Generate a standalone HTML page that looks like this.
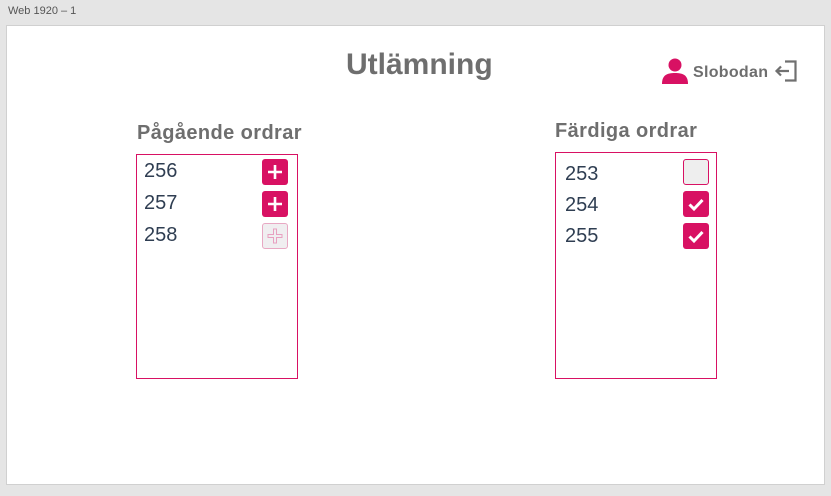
<!DOCTYPE html>
<html><head><style>
body{margin:0;width:831px;height:496px;background:#e5e5e5;font-family:"Liberation Sans",sans-serif;position:relative;overflow:hidden}
.lbl{position:absolute;left:8px;top:5px;font-size:11px;color:#555}
.page{position:absolute;left:6px;top:25px;width:819px;height:460px;background:#fff;border:1px solid #d0d0d0;box-sizing:border-box}
.t{position:absolute;color:#6e6e6e;font-weight:bold}
.box{position:absolute;border:1.5px solid #d81163;box-sizing:border-box}
.n{position:absolute;font-size:20px;color:#2f3e52}
.b{position:absolute;width:26px;height:26px;border-radius:3px;background:#d81163;box-sizing:border-box}
.b svg{position:absolute;left:0;top:0}
.e{background:#f0eef0;border:1.5px solid #e8a8c3}
.e2{background:#eeeeee;border:1.5px solid #d81163}
</style></head><body>
<div class="lbl">Web 1920 – 1</div>
<div class="page"></div>
<div class="t" style="left:346px;top:48px;font-size:30px">Utlämning</div>
<svg style="position:absolute;left:661px;top:58px" width="28" height="26" viewBox="0 0 28 26"><circle cx="14" cy="7" r="6.5" fill="#d81163"/><path d="M1 26 C1 17 6 15 14 15 C22 15 27 17 27 26 Z" fill="#d81163"/></svg>
<div class="t" style="left:693px;top:64px;font-size:16px;letter-spacing:0.3px">Slobodan</div>
<svg style="position:absolute;left:774px;top:60px" width="24" height="22" viewBox="0 0 24 22"><path d="M11 1.5 H21.5 V20.5 H11" fill="none" stroke="#707070" stroke-width="2.2"/><path d="M15 11 H3 M7 6.5 L2.5 11 L7 15.5" fill="none" stroke="#707070" stroke-width="2.2"/></svg>
<div class="t" style="left:137px;top:122px;font-size:20px;letter-spacing:0.4px">Pågående ordrar</div>
<div class="t" style="left:555px;top:120px;font-size:20px;letter-spacing:0.4px">Färdiga ordrar</div>
<div class="box" style="left:136px;top:154px;width:162px;height:225px"></div>
<div class="box" style="left:555px;top:152px;width:162px;height:227px"></div>
<div class="n" style="left:144px;top:160px">256</div>
<div class="n" style="left:144px;top:192px">257</div>
<div class="n" style="left:144px;top:224px">258</div>
<div class="b" style="left:262px;top:159px"><svg width="26" height="26"><path d="M13 6V20M6 13H20" stroke="#fff" stroke-width="2.6"/></svg></div>
<div class="b" style="left:262px;top:191px"><svg width="26" height="26"><path d="M13 6V20M6 13H20" stroke="#fff" stroke-width="2.6"/></svg></div>
<div class="b e" style="left:262px;top:223px"><svg width="24" height="24"><path d="M10.5 5H13.5V10.5H19V13.5H13.5V19H10.5V13.5H5V10.5H10.5Z" fill="none" stroke="#e8a0c0" stroke-width="1"/></svg></div>
<div class="n" style="left:565px;top:163px">253</div>
<div class="n" style="left:565px;top:194px">254</div>
<div class="n" style="left:565px;top:225px">255</div>
<div class="b e2" style="left:683px;top:159px"></div>
<div class="b" style="left:683px;top:191px"><svg width="26" height="26"><path d="M6.5 13.5L11 18L19.5 9" fill="none" stroke="#fff" stroke-width="3"/></svg></div>
<div class="b" style="left:683px;top:223px"><svg width="26" height="26"><path d="M6.5 13.5L11 18L19.5 9" fill="none" stroke="#fff" stroke-width="3"/></svg></div>
</body></html>
